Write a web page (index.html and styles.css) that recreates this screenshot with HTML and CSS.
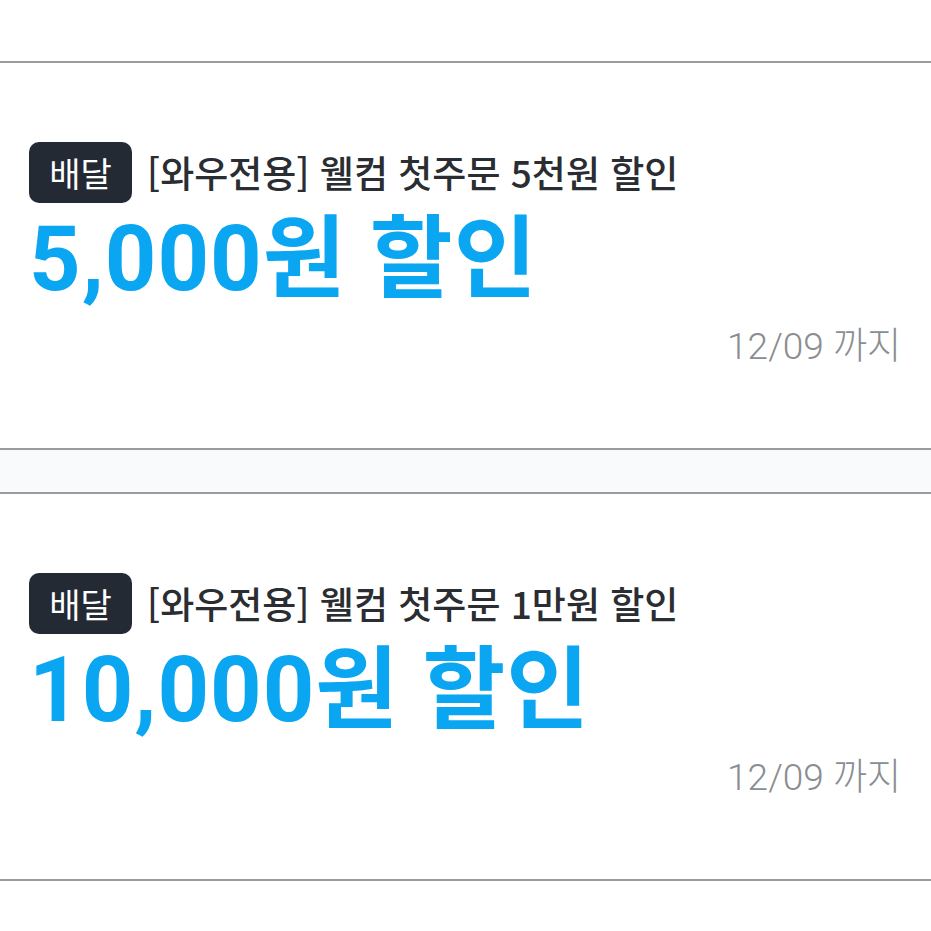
FILE: index.html
```html
<!DOCTYPE html>
<html lang="ko">
<head>
<meta charset="utf-8">
<link rel="stylesheet" href="styles.css">
</head>
<body>
<div class="top-space"></div>
<div class="list">
  <section class="coupon">
    <div class="head">
      <span class="badge">배달</span>
      <span class="title">[와우전용] 웰컴 첫주문 5천원 할인</span>
    </div>
    <div class="amount">5,000원 할인</div>
    <div class="date">12/09 까지</div>
  </section>
  <div class="divider"></div>
  <section class="coupon">
    <div class="head">
      <span class="badge">배달</span>
      <span class="title">[와우전용] 웰컴 첫주문 1만원 할인</span>
    </div>
    <div class="amount">10,000원 할인</div>
    <div class="date">12/09 까지</div>
  </section>
</div>
</body>
</html>
```
FILE: styles.css
```css
html, body {
  margin: 0;
  padding: 0;
  background: #ffffff;
  font-family: "Noto Sans CJK KR", "Noto Sans", sans-serif;
}
.top-space {
  height: 61px;
}
.coupon {
  box-sizing: border-box;
  height: 389px;
  border-top: 2px solid #9a9b9d;
  border-bottom: 2px solid #9a9b9d;
  padding: 79px 31px 0 29px;
  display: flex;
  flex-direction: column;
  background: #fff;
}
.divider {
  height: 42px;
  background: #f9fafb;
}
.head {
  display: flex;
  align-items: center;
  gap: 15px;
  height: 61px;
}
.badge {
  box-sizing: border-box;
  height: 61px;
  width: 103px;
  background: #232a33;
  color: #fff;
  border-radius: 10px;
  font-size: 34px;
  font-weight: 400;
  display: flex;
  align-items: center;
  justify-content: center;
  line-height: 1;
}
.title {
  font-size: 37px;
  font-weight: 500;
  color: #2a2d31;
  line-height: 1;
}
.amount {
  margin-top: 12px;
  font-family: Roboto, "Noto Sans CJK KR", sans-serif;
  font-size: 90px;
  font-weight: 700;
  color: #0aa6f2;
  line-height: 1;
  letter-spacing: 1px;
}
.date {
  margin-top: 22px;
  align-self: flex-end;
  font-family: Roboto, "Noto Sans CJK KR", sans-serif;
  font-size: 37px;
  font-weight: 300;
  color: #8a8d92;
  line-height: 1.1;
  margin-right: -1px;
}
```
